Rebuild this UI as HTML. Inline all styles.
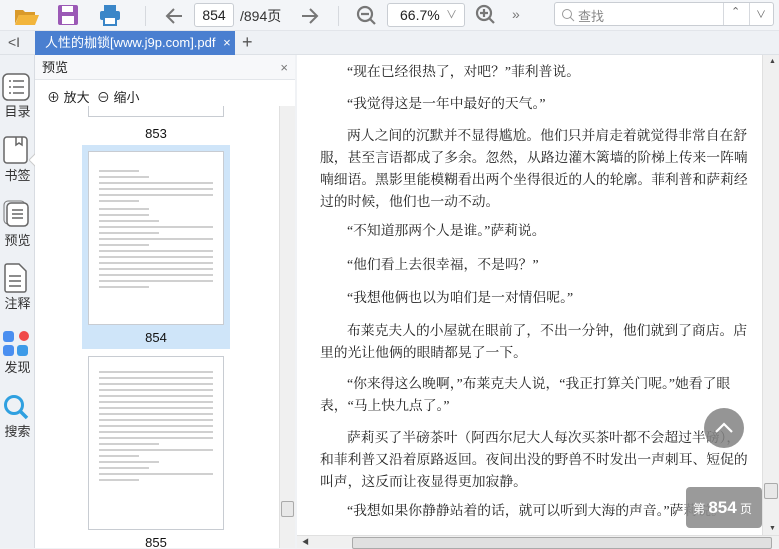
<!DOCTYPE html>
<html><head><meta charset="utf-8"><style>
*{margin:0;padding:0;box-sizing:border-box}
body{width:779px;height:548px;overflow:hidden;background:#f0f2f5;font-family:"Liberation Sans","Noto Sans CJK SC",sans-serif;position:relative}
.a{position:absolute}
#tb{left:0;top:0;width:779px;height:31px;background:#f3f5f8;border-bottom:1px solid #e2e5ea}
#tabs{left:0;top:31px;width:779px;height:24px;background:#eef1f5;border-bottom:1px solid #dde1e6}
#side{left:0;top:55px;width:35px;height:493px;background:#eef1f5;border-right:1px solid #d8dce2}
.si{position:absolute;left:0;width:35px;text-align:center;font-size:13px;color:#333}
#prev{left:35px;top:55px;width:260px;height:493px;background:#fff}
#main{left:297px;top:55px;width:465px;height:480px;background:#fff}
.l{position:absolute;font-family:"Liberation Serif","Noto Serif CJK SC",serif;font-size:13.8px;color:#222;white-space:nowrap;line-height:16px}
.thumb{position:absolute;left:88px;width:136px;background:#fff;border:1px solid #c8ccd2}
.tl{height:2px;background:#d0d0d0;margin:4px 10px 0 10px}
</style></head><body>
<div id="tb" class="a">
 <svg class="a" style="left:14px;top:6px" width="26" height="20"><path d="M1 4h8l2 2h10v3H5L1 18z" fill="#d99a2b"/><path d="M5 9h20l-4 10H1z" fill="#f2b53c"/></svg>
 <svg class="a" style="left:58px;top:5px" width="20" height="20"><rect x="0" y="0" width="20" height="20" rx="2" fill="#9b59b6"/><rect x="4" y="1" width="11" height="6" fill="#fff"/><rect x="4" y="11" width="12" height="8" fill="#fff"/></svg>
 <svg class="a" style="left:99px;top:4px" width="22" height="22"><rect x="5" y="1" width="12" height="6" fill="#3a86c8"/><rect x="1" y="7" width="20" height="9" rx="2" fill="#3a86c8"/><rect x="5" y="13" width="12" height="8" fill="#fff" stroke="#3a86c8" stroke-width="2"/></svg>
 <div class="a" style="left:145px;top:6px;width:1px;height:20px;background:#d6d9de"></div>
 <svg class="a" style="left:164px;top:6px" width="20" height="20"><path d="M18 10H3M10 3L3 10l7 7" stroke="#777" stroke-width="2" fill="none"/></svg>
 <div class="a" style="left:194px;top:3px;width:40px;height:24px;background:#fff;border:1px solid #c9cdd3;border-radius:3px;font-size:14px;text-align:center;line-height:22px;color:#222">854</div>
 <div class="a" style="left:240px;top:6px;font-size:14px;color:#333">/894页</div>
 <svg class="a" style="left:300px;top:6px" width="20" height="20"><path d="M2 10h15M10 3l7 7-7 7" stroke="#777" stroke-width="2" fill="none"/></svg>
 <div class="a" style="left:338px;top:6px;width:1px;height:20px;background:#d6d9de"></div>
 <svg class="a" style="left:356px;top:5px" width="22" height="22"><circle cx="9" cy="9" r="7" stroke="#777" stroke-width="2.2" fill="none"/><path d="M5 9h8M14 14l5 5" stroke="#777" stroke-width="2.2"/></svg>
 <div class="a" style="left:387px;top:3px;width:78px;height:24px;background:#fff;border:1px solid #c9cdd3;border-radius:3px;font-size:14px;line-height:22px;padding-left:12px;color:#222">66.7%<span style="position:absolute;right:7px;top:0;color:#888;font-size:11px">&#8744;</span></div>
 <svg class="a" style="left:475px;top:4px" width="22" height="22"><circle cx="9" cy="9" r="7" stroke="#777" stroke-width="2.2" fill="none"/><path d="M5 9h8M9 5v8M14 14l5 5" stroke="#777" stroke-width="2.2"/></svg>
 <div class="a" style="left:512px;top:6px;font-size:14px;color:#777">&#187;</div>
 <div class="a" style="left:554px;top:2px;width:220px;height:24px;background:#fff;border:1px solid #c9cdd3;border-radius:3px">
  <svg class="a" style="left:6px;top:5px" width="14" height="14"><circle cx="6" cy="6" r="4.5" stroke="#999" fill="none"/><path d="M9 9l4 4" stroke="#999"/></svg>
  <div class="a" style="left:23px;top:3px;font-size:13px;color:#888">查找</div>
  <div class="a" style="left:168px;top:0;width:1px;height:22px;background:#d6d9de"></div>
  <div class="a" style="left:194px;top:0;width:1px;height:22px;background:#d6d9de"></div>
  <div class="a" style="left:176px;top:2px;font-size:11px;color:#666">&#8963;</div>
  <div class="a" style="left:201px;top:3px;font-size:10px;color:#666">&#8744;</div>
 </div>
</div>
<div id="tabs" class="a">
 <div class="a" style="left:8px;top:3px;font-size:14px;color:#555">&lt;I</div>
 <div class="a" style="left:35px;top:0;width:200px;height:24px;background:#4a7fd0;color:#fff;font-size:13px;line-height:24px;padding-left:10px">人性的枷锁[www.j9p.com].pdf <span style="margin-left:4px">×</span></div>
 <div class="a" style="left:242px;top:1px;font-size:18px;color:#555">+</div>
</div>
<div id="side" class="a">
 <svg class="a" style="left:2px;top:18px" width="28" height="28"><rect x="1" y="1" width="26" height="26" rx="5" stroke="#666" stroke-width="1.5" fill="#fff"/><path d="M7 8h2M11 8h11M7 14h2M11 14h11M7 20h2M11 20h11" stroke="#666" stroke-width="1.6"/></svg>
 <div class="si" style="top:46px">目录</div>
 <svg class="a" style="left:3px;top:81px" width="26" height="28"><rect x="1" y="1" width="23" height="26" rx="3" stroke="#666" stroke-width="1.5" fill="#fff"/><path d="M13 1v8l3-2 3 2V1" stroke="#666" stroke-width="1.5" fill="none"/></svg>
 <div class="si" style="top:110px">书签</div>
 <svg class="a" style="left:3px;top:145px" width="26" height="28"><rect x="1" y="1" width="21" height="23" rx="4" stroke="#777" fill="none"/><rect x="4" y="3" width="21" height="23" rx="4" stroke="#666" stroke-width="1.5" fill="#fff"/><path d="M9 10h11M9 14h11M9 18h11" stroke="#666" stroke-width="1.5"/></svg>
 <div class="si" style="top:175px">预览</div>
 <svg class="a" style="left:4px;top:208px" width="24" height="30"><path d="M1 3a2 2 0 0 1 2-2h12l7 7v19a2 2 0 0 1-2 2H3a2 2 0 0 1-2-2z" stroke="#666" stroke-width="1.5" fill="#fff"/><path d="M5 13h12M5 18h12M5 23h12" stroke="#666" stroke-width="1.5"/></svg>
 <div class="si" style="top:238px">注释</div>
 <svg class="a" style="left:3px;top:276px" width="26" height="26"><rect x="0" y="0" width="11" height="11" rx="3" fill="#4a8ff0"/><circle cx="21" cy="5" r="5" fill="#f04a4a"/><rect x="0" y="14" width="11" height="11" rx="3" fill="#4a8ff0"/><rect x="14" y="14" width="11" height="11" rx="3" fill="#3d9be8"/></svg>
 <div class="si" style="top:302px">发现</div>
 <svg class="a" style="left:3px;top:339px" width="26" height="26"><circle cx="11" cy="11" r="8.5" stroke="#2fa0e0" stroke-width="3" fill="none"/><path d="M17 17l7 7" stroke="#2fa0e0" stroke-width="3.5"/></svg>
 <div class="si" style="top:366px">搜索</div>
</div>
<svg class="a" style="left:29px;top:153px" width="8" height="14"><path d="M7 0L0 7l7 7" fill="#fff" stroke="#ccc"/></svg>
<div id="prev" class="a">
 <div class="a" style="left:0;top:0;width:260px;height:25px;border-bottom:1px solid #e3e6ea;background:#f7f8fa;font-size:13px;line-height:25px;padding-left:7px;color:#222">预览<span style="position:absolute;right:7px;color:#777">×</span></div>
 <div class="a" style="left:12px;top:32px;font-size:13px;color:#222">⊕ 放大 &nbsp;⊖ 缩小</div>
 <div class="a" style="left:0;top:51px;width:244px;height:442px;overflow:hidden">
  <div class="thumb" style="left:53px;top:-10px;height:21px"></div>
  <div class="a" style="left:53px;top:20px;width:136px;text-align:center;font-size:13px;color:#111">853</div>
  <div class="a" style="left:47px;top:39px;width:148px;height:204px;background:#cfe5f9"></div>
  <div class="thumb" style="left:53px;top:45px;height:174px;padding-top:14px">
   <div class="tl" style="width:40px"></div><div class="tl" style="width:50px"></div><div class="tl"></div><div class="tl"></div><div class="tl"></div><div class="tl" style="width:40px;margin-bottom:6px"></div><div class="tl" style="width:50px"></div><div class="tl" style="width:50px"></div><div class="tl" style="width:60px"></div><div class="tl"></div><div class="tl" style="width:60px"></div><div class="tl"></div><div class="tl" style="width:50px"></div><div class="tl"></div><div class="tl"></div><div class="tl"></div><div class="tl"></div><div class="tl"></div><div class="tl"></div><div class="tl" style="width:50px"></div>
  </div>
  <div class="a" style="left:53px;top:224px;width:136px;text-align:center;font-size:13px;color:#111">854</div>
  <div class="thumb" style="left:53px;top:250px;height:174px;padding-top:10px">
   <div class="tl"></div><div class="tl"></div><div class="tl"></div><div class="tl"></div><div class="tl"></div><div class="tl"></div><div class="tl"></div><div class="tl"></div><div class="tl"></div><div class="tl"></div><div class="tl"></div><div class="tl"></div><div class="tl" style="width:60px"></div><div class="tl"></div><div class="tl" style="width:40px"></div><div class="tl" style="width:60px"></div><div class="tl" style="width:50px"></div><div class="tl"></div><div class="tl" style="width:40px"></div>
  </div>
  <div class="a" style="left:53px;top:429px;width:136px;text-align:center;font-size:13px;color:#111">855</div>
 </div>
 <div class="a" style="left:244px;top:51px;width:16px;height:442px;background:#f0f0f0;border-left:1px solid #e0e0e0"></div>
 <div class="a" style="left:246px;top:446px;width:13px;height:16px;background:#e8e8e8;border:1px solid #aaa;border-radius:2px"></div>
</div>
<div id="main" class="a">
 <div class="l" style="left:50px;top:9px">“现在已经很热了，对吧？”菲利普说。</div>
 <div class="l" style="left:50px;top:41px">“我觉得这是一年中最好的天气。”</div>
 <div class="l" style="left:50px;top:73px">两人之间的沉默并不显得尴尬。他们只并肩走着就觉得非常自在舒</div>
 <div class="l" style="left:23px;top:95px">服，甚至言语都成了多余。忽然，从路边灌木篱墙的阶梯上传来一阵喃</div>
 <div class="l" style="left:23px;top:117px">喃细语。黑影里能模糊看出两个坐得很近的人的轮廓。菲利普和萨莉经</div>
 <div class="l" style="left:23px;top:139px">过的时候，他们也一动不动。</div>
 <div class="l" style="left:50px;top:168px">“不知道那两个人是谁。”萨莉说。</div>
 <div class="l" style="left:50px;top:202px">“他们看上去很幸福，不是吗？”</div>
 <div class="l" style="left:50px;top:235px">“我想他俩也以为咱们是一对情侣呢。”</div>
 <div class="l" style="left:50px;top:268px">布莱克夫人的小屋就在眼前了，不出一分钟，他们就到了商店。店</div>
 <div class="l" style="left:23px;top:290px">里的光让他俩的眼睛都晃了一下。</div>
 <div class="l" style="left:50px;top:321px">“你来得这么晚啊，”布莱克夫人说，“我正打算关门呢。”她看了眼</div>
 <div class="l" style="left:23px;top:343px">表，“马上快九点了。”</div>
 <div class="l" style="left:50px;top:375px">萨莉买了半磅茶叶（阿西尔尼大人每次买茶叶都不会超过半磅），</div>
 <div class="l" style="left:23px;top:397px">和菲利普又沿着原路返回。夜间出没的野兽不时发出一声刺耳、短促的</div>
 <div class="l" style="left:23px;top:419px">叫声，这反而让夜显得更加寂静。</div>
 <div class="l" style="left:50px;top:448px">“我想如果你静静站着的话，就可以听到大海的声音。”萨莉说。</div>
</div>
<div class="a" style="left:762px;top:55px;width:17px;height:480px;background:#f0f0f0;border-left:1px solid #e0e0e0"><div class="a" style="left:6px;top:3px;font-size:7px;color:#444">▲</div><div class="a" style="left:1px;top:428px;width:14px;height:16px;background:#e8e8e8;border:1px solid #aaa;border-radius:2px"></div><div class="a" style="left:6px;top:470px;font-size:7px;color:#444">▼</div></div>
<div class="a" style="left:297px;top:535px;width:482px;height:13px;background:#f0f0f0;border-top:1px solid #e0e0e0"><div class="a" style="left:5px;top:1px;font-size:7px;color:#444">◀</div><div class="a" style="left:55px;top:1px;width:420px;height:12px;background:#e0e0e0;border:1px solid #aaa;border-radius:2px"></div></div>
<div class="a" style="left:704px;top:408px;width:40px;height:40px;border-radius:50%;background:rgba(130,130,130,0.85)"><svg width="40" height="40"><path d="M12 24l8-8 8 8" stroke="#fff" stroke-width="2.2" fill="none"/></svg></div>
<div class="a" style="left:686px;top:487px;width:76px;height:41px;border-radius:4px;background:rgba(140,140,140,0.88);color:#fff;font-size:12px;line-height:41px;padding-left:7px">第 <b style="font-size:17px">854</b> 页</div>
</body></html>
